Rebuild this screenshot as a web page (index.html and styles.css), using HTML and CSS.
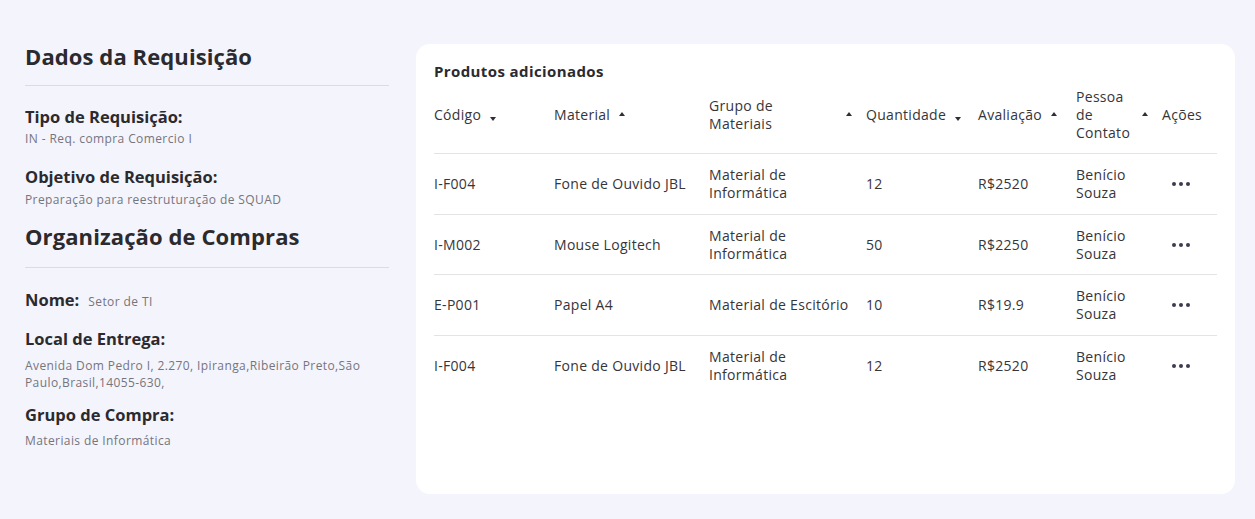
FILE: index.html
```html
<!DOCTYPE html>
<html lang="pt-BR">
<head>
<meta charset="utf-8">
<title>Requisição</title>
<link rel="stylesheet" href="styles.css">
</head>
<body>
<div class="page">
  <aside class="info">
    <h2 class="sec-title">Dados da Requisição</h2>
    <hr class="rule">
    <div class="field f-tipo">
      <div class="label">Tipo de Requisição:</div>
      <div class="value">IN - Req. compra Comercio I</div>
    </div>
    <div class="field f-obj">
      <div class="label">Objetivo de Requisição:</div>
      <div class="value v-obj">Preparação para reestruturação de SQUAD</div>
    </div>
    <h2 class="sec-title sec2">Organização de Compras</h2>
    <hr class="rule rule2">
    <div class="field inline f-nome">
      <span class="label">Nome:</span>
      <span class="value">Setor de TI</span>
    </div>
    <div class="field f-local">
      <div class="label">Local de Entrega:</div>
      <div class="value addr">Avenida Dom Pedro I, 2.270, Ipiranga,Ribeirão Preto,São Paulo,Brasil,14055-630,</div>
    </div>
    <div class="field f-grupo">
      <div class="label">Grupo de Compra:</div>
      <div class="value v-grupo">Materiais de Informática</div>
    </div>
  </aside>

  <section class="card">
    <h3 class="card-title">Produtos adicionados</h3>
    <div class="table">
      <div class="row head">
        <div class="th"><span>Código</span><i class="caret down"></i></div>
        <div class="th"><span>Material</span><i class="caret up"></i></div>
        <div class="th"><span class="grow">Grupo de<br>Materiais</span><i class="caret up"></i></div>
        <div class="th"><span>Quantidade</span><i class="caret down"></i></div>
        <div class="th"><span>Avaliação</span><i class="caret up"></i></div>
        <div class="th"><span class="grow">Pessoa<br>de<br>Contato</span><i class="caret up"></i></div>
        <div class="th"><span>Ações</span></div>
      </div>
      <div class="row">
        <div class="td">I-F004</div>
        <div class="td">Fone de Ouvido JBL</div>
        <div class="td">Material de<br>Informática</div>
        <div class="td">12</div>
        <div class="td">R$2520</div>
        <div class="td">Benício<br>Souza</div>
        <div class="td act"><span class="dots"><b></b><b></b><b></b></span></div>
      </div>
      <div class="row">
        <div class="td">I-M002</div>
        <div class="td">Mouse Logitech</div>
        <div class="td">Material de<br>Informática</div>
        <div class="td">50</div>
        <div class="td">R$2250</div>
        <div class="td">Benício<br>Souza</div>
        <div class="td act"><span class="dots"><b></b><b></b><b></b></span></div>
      </div>
      <div class="row">
        <div class="td">E-P001</div>
        <div class="td">Papel A4</div>
        <div class="td nowrap">Material de Escitório</div>
        <div class="td">10</div>
        <div class="td">R$19.9</div>
        <div class="td">Benício<br>Souza</div>
        <div class="td act"><span class="dots"><b></b><b></b><b></b></span></div>
      </div>
      <div class="row last">
        <div class="td">I-F004</div>
        <div class="td">Fone de Ouvido JBL</div>
        <div class="td">Material de<br>Informática</div>
        <div class="td">12</div>
        <div class="td">R$2520</div>
        <div class="td">Benício<br>Souza</div>
        <div class="td act"><span class="dots"><b></b><b></b><b></b></span></div>
      </div>
    </div>
  </section>
</div>
</body>
</html>
```

FILE: styles.css
```css
* { box-sizing: border-box; }
html, body { margin: 0; padding: 0; }
body {
  background: #f4f4fc;
  font-family: "Open Sans", "DejaVu Sans", sans-serif;
  color: #2e2e33;
}
.page {
  display: flex;
  align-items: flex-start;
  padding: 44px 20px 0 25px;
  gap: 27px;
}
.info {
  width: 364px;
  flex: none;
}
.sec-title {
  margin: 0;
  font-size: 22px;
  font-weight: 700;
  line-height: 24px;
  height: 24px;
  color: #2b2a2e;
  letter-spacing: 0.1px;
}
.sec2 { margin-top: 16px; }
.rule {
  border: 0;
  border-top: 1px solid #dcdce0;
  margin: 17px 0 0;
}
.rule2 { margin-top: 19px; }
.label {
  font-size: 16.5px;
  font-weight: 700;
  line-height: 22px;
  color: #2b2a2e;
}
.value {
  font-size: 12px;
  line-height: 17px;
  color: #75757c;
  letter-spacing: 0.4px;
  margin-top: 2px;
}
.f-tipo { margin-top: 20px; }
.f-obj { margin-top: 19px; }
.v-obj { margin-top: 3px; }
.f-nome { margin-top: 21px; }
.f-local { margin-top: 17px; }
.addr { margin-top: 7px; }
.f-grupo { margin-top: 13px; }
.v-grupo { margin-top: 6px; }
.inline { display: flex; align-items: baseline; gap: 9px; }
.inline .value { margin-top: 0; }
.card {
  flex: 1;
  background: #ffffff;
  border-radius: 14px;
  height: 450px;
  padding: 17px 18px 0 18px;
}
.card-title {
  margin: 0;
  font-size: 15px;
  font-weight: 700;
  line-height: 20px;
  color: #2b2a2e;
  letter-spacing: 0.4px;
}
.table { margin-top: 7px; }
.row {
  display: grid;
  grid-template-columns: 120px 155px 157px 112px 98px 86px 1fr;
  align-items: center;
  min-height: 60.7px;
  border-bottom: 1px solid #e3e3e6;
  font-size: 14px;
  line-height: 18px;
  letter-spacing: 0.3px;
  color: #36353a;
}
.row.head { height: 66px; padding-bottom: 12px; }
.row.last { border-bottom: 0; }
.th {
  display: flex;
  align-items: center;
  gap: 9px;
  padding-right: 14px;
}
.th .grow { flex: 1; }
.caret {
  width: 0; height: 0;
  border-left: 3px solid transparent;
  border-right: 3px solid transparent;
  flex: none;
}
.caret.up { border-bottom: 4px solid #2e2e33; margin-top: -3px; }
.caret.down { border-top: 4px solid #2e2e33; margin-top: 7px; }
.td.nowrap { white-space: nowrap; }
.act { padding-left: 10px; }
.dots { display: inline-flex; gap: 3px; position: relative; top: -3px; }
.dots b { width: 4px; height: 4px; border-radius: 50%; background: #3d3b4f; display: block; }
```
